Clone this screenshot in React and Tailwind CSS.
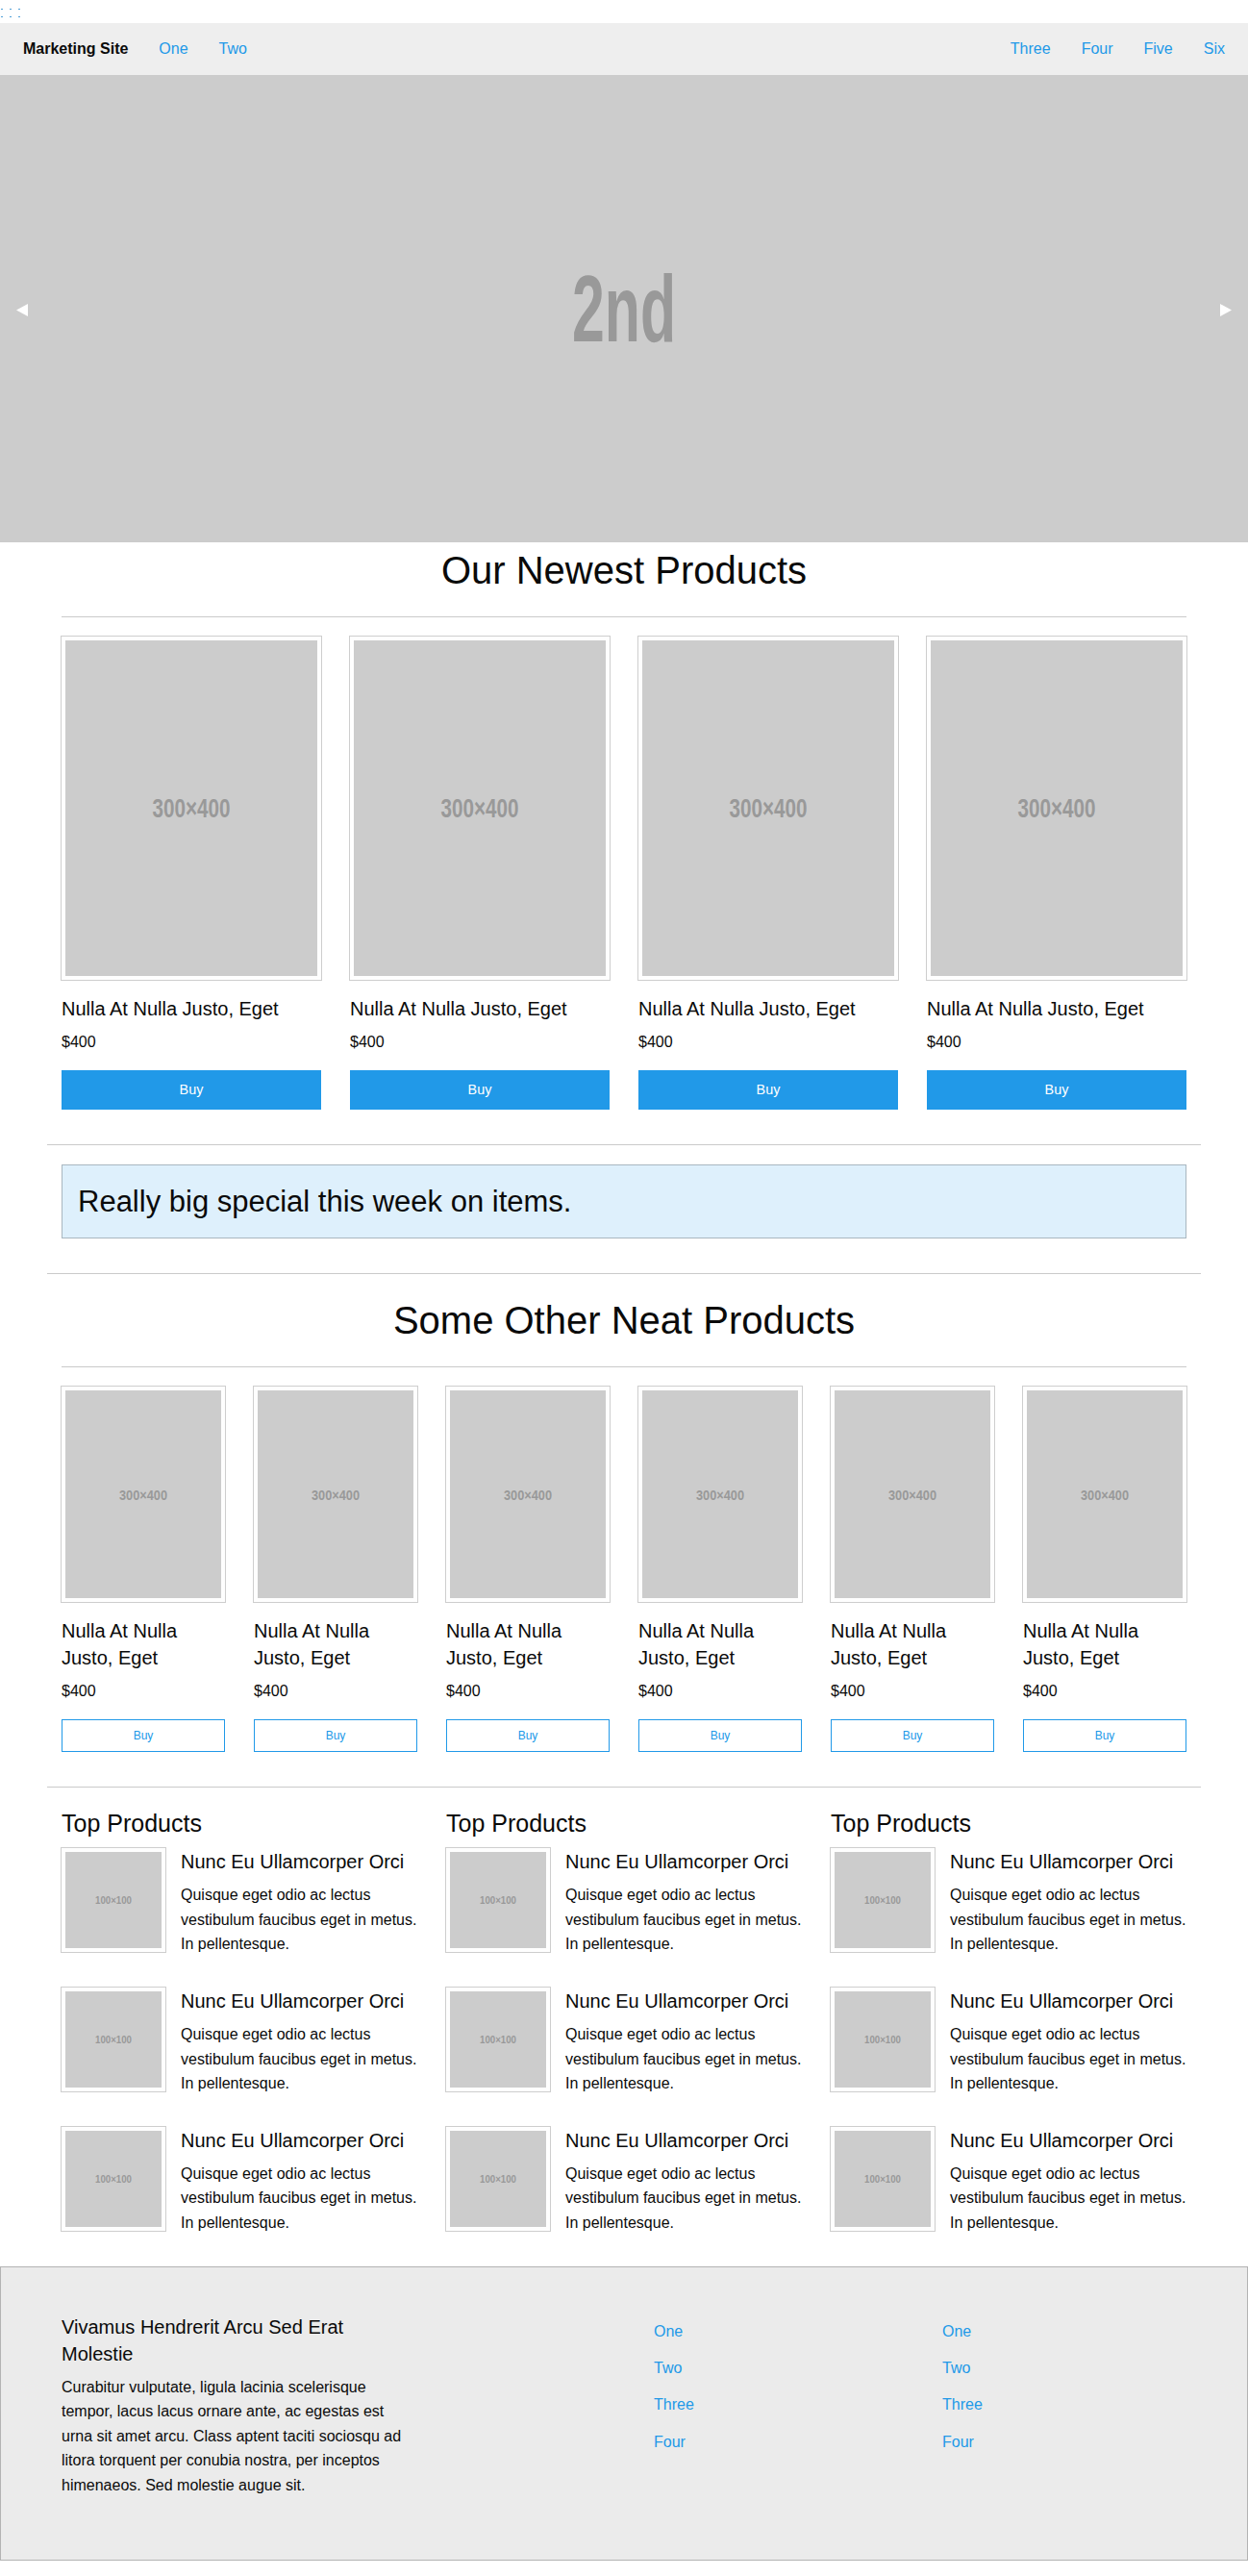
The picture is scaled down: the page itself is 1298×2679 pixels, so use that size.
import React from "react";

const placeholderFont = "'Liberation Sans',Arial,sans-serif";

const Placeholder = ({ w, h, label, size, len }) => (
    <svg width={w} height={h} viewBox={`0 0 ${w} ${h}`} className="block">
        <rect width={w} height={h} fill="#cccccc" />
        <text
            x={w / 2}
            y={h / 2}
            textAnchor="middle"
            dominantBaseline="central"
            fontFamily={placeholderFont}
            fontWeight="700"
            fontSize={size}
            fill="#999999"
            textLength={len}
            lengthAdjust="spacingAndGlyphs"
        >
            {label}
        </text>
    </svg>
);

const Thumb = ({ children }) => (
    <div className="w-fit border-4 border-[#fefefe] shadow-[0_0_0_1px_rgba(10,10,10,0.2)]">
        {children}
    </div>
);

const Rule = ({ inset }) => (
    <div className={inset ? "px-[15px]" : ""}>
        <div className="my-5 h-0 border-b border-[#cacaca]" />
    </div>
);

const NewestCard = () => (
    <div className="w-[300px] px-[15px]">
        <div className="mb-4">
            <Thumb>
                <Placeholder w={262} h={349} label="300×400" size={28} len={81} />
            </Thumb>
        </div>
        <h5 className="text-[20px] leading-[1.4] mb-2">Nulla At Nulla Justo, Eget</h5>
        <p className="leading-[1.6] mb-4">$400</p>
        <button className="block w-full mb-4 px-4 py-[12.24px] text-[14.4px] leading-none border border-transparent bg-[#2199e8] text-white">
            Buy
        </button>
    </div>
);

const NeatCard = () => (
    <div className="w-[200px] px-[15px]">
        <div className="mb-4">
            <Thumb>
                <Placeholder w={162} h={216} label="300×400" size={15} len={50} />
            </Thumb>
        </div>
        <h5 className="text-[20px] leading-[1.4] mb-2">Nulla At Nulla Justo, Eget</h5>
        <p className="leading-[1.6] mb-4">$400</p>
        <button className="block w-full mb-4 px-4 py-[10.2px] text-[12px] leading-none border border-[#2199e8] text-[#2199e8] bg-transparent">
            Buy
        </button>
    </div>
);

const MediaItem = () => (
    <div className="flex mb-4">
        <div className="pr-4 shrink-0">
            <Thumb>
                <Placeholder w={100} h={100} label="100×100" size={10} len={38} />
            </Thumb>
        </div>
        <div className="flex-1">
            <h5 className="text-[20px] leading-[1.4] mb-2">Nunc Eu Ullamcorper Orci</h5>
            <p className="leading-[1.6] mb-4">
                Quisque eget odio ac lectus vestibulum faucibus eget in metus. In pellentesque.
            </p>
        </div>
    </div>
);

const TopColumn = () => (
    <div className="w-[400px] px-[15px]">
        <h4 className="text-[25px] leading-[1.4] mb-2">Top Products</h4>
        <MediaItem />
        <MediaItem />
        <MediaItem />
    </div>
);

const FooterMenu = () => (
    <ul>
        {["One", "Two", "Three", "Four"].map((item) => (
            <li key={item}>
                <a href="#" className="block px-4 py-[11.2px] leading-none text-[#2199e8]">{item}</a>
            </li>
        ))}
    </ul>
);

const App = () => {
    return (
        <div className="bg-white text-[#0a0a0a] text-[16px] font-['Liberation_Sans',Arial,sans-serif]">
            {/* top strip */}
            <div className="h-6">
                <svg width="24" height="24" className="block">
                    {[1, 10, 19].map((x) => (
                        <g key={x} fill="#4f9fd8">
                            <rect x={x} y={9} width={2} height={1} />
                            <rect x={x} y={17} width={2} height={1} />
                        </g>
                    ))}
                </svg>
            </div>

            {/* top bar */}
            <nav className="flex items-center justify-between bg-[#eeeeee] p-2">
                <ul className="flex">
                    <li className="px-4 py-[11.2px] leading-none font-bold">Marketing Site</li>
                    <li><a href="#" className="block px-4 py-[11.2px] leading-none text-[#2199e8]">One</a></li>
                    <li><a href="#" className="block px-4 py-[11.2px] leading-none text-[#2199e8]">Two</a></li>
                </ul>
                <ul className="flex">
                    {["Three", "Four", "Five", "Six"].map((item) => (
                        <li key={item}>
                            <a href="#" className="block px-4 py-[11.2px] leading-none text-[#2199e8]">{item}</a>
                        </li>
                    ))}
                </ul>
            </nav>

            {/* orbit */}
            <div className="relative h-[486px] bg-[#cccccc] flex items-center justify-center">
                <svg width="280" height="160" className="block">
                    <text
                        x="140"
                        y="80"
                        textAnchor="middle"
                        dominantBaseline="central"
                        fontFamily={placeholderFont}
                        fontWeight="700"
                        fontSize="98"
                        fill="#999999"
                        textLength="108"
                        lengthAdjust="spacingAndGlyphs"
                    >
                        2nd
                    </text>
                </svg>
                <button className="absolute left-[17px] top-[238px]">
                    <svg width="12" height="13" className="block"><polygon points="12,0 12,13 0,6.5" fill="#ffffff" /></svg>
                </button>
                <button className="absolute right-[17px] top-[238px]">
                    <svg width="12" height="13" className="block"><polygon points="0,0 0,13 12,6.5" fill="#ffffff" /></svg>
                </button>
            </div>

            <div className="max-w-[1200px] mx-auto">
                {/* newest products */}
                <div className="px-[15px] pt-px">
                    <h2 className="text-center text-[40px] leading-[1.4]">Our Newest Products</h2>
                </div>
                <Rule inset />
                <div className="flex">
                    <NewestCard />
                    <NewestCard />
                    <NewestCard />
                    <NewestCard />
                </div>
                <Rule />

                <div className="flow-root px-[15px]">
                    <div className="mb-4 p-4 bg-[#def0fc] border border-[rgba(10,10,10,0.25)]">
                        <h3 className="text-[31px] leading-[1.4]">Really big special this week on items.</h3>
                    </div>
                </div>
                <Rule />

                {/* other products */}
                <div className="px-[15px]">
                    <h2 className="text-center text-[40px] leading-[1.4]">Some Other Neat Products</h2>
                </div>
                <Rule inset />
                <div className="flex">
                    <NeatCard />
                    <NeatCard />
                    <NeatCard />
                    <NeatCard />
                    <NeatCard />
                    <NeatCard />
                </div>
                <Rule />

                <div className="flex">
                    <TopColumn />
                    <TopColumn />
                    <TopColumn />
                </div>
            </div>

            {/* footer */}
            <footer className="mb-4 p-12 bg-[#ebebeb] border border-[rgba(10,10,10,0.25)]">
                <div className="max-w-[1200px] mx-auto flex">
                    <div className="w-[400px] px-[15px]">
                        <h5 className="text-[20px] leading-[1.4] mb-2">Vivamus Hendrerit Arcu Sed Erat Molestie</h5>
                        <p className="leading-[1.6] mb-4">
                            Curabitur vulputate, ligula lacinia scelerisque tempor, lacus lacus ornare ante, ac egestas est urna sit amet arcu. Class aptent taciti sociosqu ad litora torquent per conubia nostra, per inceptos himenaeos. Sed molestie augue sit.
                        </p>
                    </div>
                    <div className="w-[300px] ml-[200px] px-[15px]">
                        <FooterMenu />
                    </div>
                    <div className="w-[300px] px-[15px]">
                        <FooterMenu />
                    </div>
                </div>
            </footer>
        </div>
    );
};

export default App;
